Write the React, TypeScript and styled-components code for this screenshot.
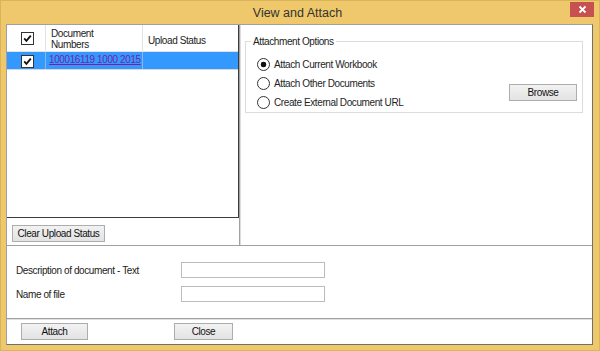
import React from 'react';
import styled, { createGlobalStyle } from 'styled-components';

const GlobalStyle = createGlobalStyle`
  html, body {
    margin: 0;
    padding: 0;
    background: #efc86b;
  }
  body {
    font-family: "Liberation Sans", Arial, sans-serif;
    font-size: 10px;
    letter-spacing: -0.4px;
    color: #1e1e1e;
  }
`;

const CheckMark = ({ checked }: { checked: boolean }) => (
    <CheckBox>
        {checked && (
            <svg width="9" height="9" viewBox="0 0 9 9">
                <path d="M1.2 4.4 L3.4 6.8 L7.8 1.6" fill="none" stroke="#111" strokeWidth="1.8"/>
            </svg>
        )}
    </CheckBox>
);

const Radio = ({ selected, label }: { selected?: boolean; label: string }) => (
    <RadioRow>
        <RadioDot $selected={!!selected}/>
        <span>{label}</span>
    </RadioRow>
);

const App = () => {
    return (
        <Frame>
            <GlobalStyle/>
            <TitleBar>
                <Title>View and Attach</Title>
                <CloseButton>
                    <svg width="9" height="9" viewBox="0 0 9 9">
                        <path d="M1.5 1.5 L7.5 7.5 M7.5 1.5 L1.5 7.5" stroke="#fff" strokeWidth="1.8"/>
                    </svg>
                </CloseButton>
            </TitleBar>
            <Client>
                <TopSection>
                    <LeftPane>
                        <Grid>
                            <HeaderRow>
                                <CheckCell><CheckMark checked/></CheckCell>
                                <HeadCell $width={97}>Document<br/>Numbers</HeadCell>
                                <HeadCell $pad={10}>Upload Status</HeadCell>
                            </HeaderRow>
                            <DataRow>
                                <CheckCell $selected><CheckMark checked/></CheckCell>
                                <DataCell $width={97}><DocLink>100016119 1000 2015</DocLink></DataCell>
                                <DataCell/>
                            </DataRow>
                        </Grid>
                        <ButtonBar>
                            <WinButton $width={93}>Clear Upload Status</WinButton>
                        </ButtonBar>
                    </LeftPane>
                    <RightPane>
                        <GroupBox>
                            <Legend>Attachment Options</Legend>
                            <GroupBody>
                                <RadioList>
                                    <Radio selected label="Attach Current Workbook"/>
                                    <Radio label="Attach Other Documents"/>
                                    <Radio label="Create External Document URL"/>
                                </RadioList>
                                <BrowseSlot>
                                    <WinButton $width={68}>Browse</WinButton>
                                </BrowseSlot>
                            </GroupBody>
                        </GroupBox>
                    </RightPane>
                </TopSection>
                <FormSection>
                    <FormRow>
                        <FieldLabel>Description of document - Text</FieldLabel>
                        <TextBox/>
                    </FormRow>
                    <FormRow>
                        <FieldLabel>Name of file</FieldLabel>
                        <TextBox/>
                    </FormRow>
                </FormSection>
                <BottomBar>
                    <WinButton $width={67}>Attach</WinButton>
                    <WinButton $width={59}>Close</WinButton>
                </BottomBar>
            </Client>
        </Frame>
    );
};
export default App;

const Frame = styled.div`
  width: 600px;
  height: 351px;
  box-sizing: border-box;
  padding: 0 6px 5px 5px;
  display: flex;
  flex-direction: column;
  background: #efc86b;
  border: 1px solid #d9b45c;
`;

const TitleBar = styled.div`
  position: relative;
  height: 23px;
  display: flex;
  align-items: center;
  justify-content: center;
`;

const Title = styled.div`
  font-size: 12.5px;
  letter-spacing: 0;
  color: #333;
  margin-left: -4px;
  margin-top: 1px;
`;

const CloseButton = styled.div`
  position: absolute;
  right: -1px;
  top: 1px;
  width: 24px;
  height: 15px;
  background: #c75050;
  display: flex;
  align-items: center;
  justify-content: center;
`;

const Client = styled.div`
  flex: 1;
  display: flex;
  flex-direction: column;
  background: #fff;
  border: 1px solid #a0a0a0;
  border-right-color: #707070;
  border-bottom-color: #707070;
`;

const TopSection = styled.div`
  height: 220px;
  display: flex;
  border-bottom: 1px solid #a0a0a0;
`;

const LeftPane = styled.div`
  width: 232px;
  display: flex;
  flex-direction: column;
  border-right: 1px solid #a0a0a0;
  margin-right: 1px;
  box-shadow: 1px 0 0 #dcdcdc;
`;

const Grid = styled.div`
  height: 192px;
  border: 1px solid #3c3c3c;
  border-top: none;
  border-left: none;
  background: #fff;
`;

const HeaderRow = styled.div`
  display: flex;
  height: 26px;
  border-bottom: 1px solid #e2e2e2;
`;

const DataRow = styled.div`
  display: flex;
  height: 17px;
  background: #3399ff;
  border-bottom: 1px solid #d8d8d8;
`;

const CheckCell = styled.div<{ $selected?: boolean }>`
  width: 36px;
  display: flex;
  align-items: center;
  justify-content: center;
  border-right: 1px solid ${p => (p.$selected ? '#8ab8e6' : '#e2e2e2')};
  padding-left: 2px;
  padding-top: 1px;
`;

const CheckBox = styled.div`
  width: 11px;
  height: 11px;
  border: 1px solid #333;
  background: #fff;
  display: flex;
  align-items: center;
  justify-content: center;
`;

const HeadCell = styled.div<{ $width?: number; $pad?: number }>`
  ${p => (p.$width ? `width: ${p.$width}px;` : 'flex: 1;')}
  box-sizing: border-box;
  padding: ${p => p.$pad ?? 3}px 0 0 5px;
  border-right: ${p => (p.$width ? '1px solid #e2e2e2' : 'none')};
  line-height: 11px;
  color: #222;
`;

const DataCell = styled.div<{ $width?: number }>`
  ${p => (p.$width ? `width: ${p.$width}px;` : 'flex: 1;')}
  box-sizing: border-box;
  padding: 2px 0 0 3px;
  border-right: ${p => (p.$width ? '1px solid #8ab8e6' : 'none')};
  white-space: nowrap;
`;

const DocLink = styled.span`
  color: #7a1fa2;
  text-decoration: underline;
`;

const ButtonBar = styled.div`
  padding: 7px 0 0 5px;
`;

const WinButton = styled.div<{ $width: number }>`
  width: ${p => p.$width}px;
  height: 17px;
  box-sizing: border-box;
  border: 1px solid #adadad;
  background: linear-gradient(#f2f2f2, #e3e3e3);
  display: flex;
  align-items: center;
  justify-content: center;
  color: #111;
  white-space: nowrap;
`;

const RightPane = styled.div`
  flex: 1;
  padding: 11px 9px 0 4px;
`;

const GroupBox = styled.fieldset`
  margin: 0;
  height: 77px;
  box-sizing: border-box;
  border: 1px solid #dcdcdc;
  padding: 0 5px 0 11px;
`;

const Legend = styled.legend`
  padding: 0 2px;
  margin-left: -6px;
  margin-top: 1px;
  color: #222;
`;

const GroupBody = styled.div`
  display: flex;
  justify-content: space-between;
  padding-top: 11px;
`;

const RadioList = styled.div`
  display: flex;
  flex-direction: column;
  gap: 6px;
`;

const BrowseSlot = styled.div`
  padding-top: 26px;
`;

const RadioRow = styled.div`
  display: flex;
  align-items: center;
  gap: 4px;
  height: 13px;
`;

const RadioDot = styled.div<{ $selected: boolean }>`
  width: 11px;
  height: 11px;
  border: 1px solid #333;
  border-radius: 50%;
  background: ${p => (p.$selected ? 'radial-gradient(circle, #111 0 2.6px, #fff 3.1px)' : '#fff')};
`;

const FormSection = styled.div`
  flex: 1;
  display: flex;
  flex-direction: column;
  gap: 8px;
  padding: 16px 0 0 9px;
  border-bottom: 1px solid #a0a0a0;
  box-shadow: 0 1px 0 #e0e0e0;
`;

const FormRow = styled.div`
  display: flex;
  align-items: center;
`;

const FieldLabel = styled.div`
  width: 165px;
  color: #222;
`;

const TextBox = styled.div`
  width: 144px;
  height: 16px;
  box-sizing: border-box;
  border: 1px solid #bcbcbc;
  background: #fff;
`;

const BottomBar = styled.div`
  height: 25px;
  display: flex;
  align-items: center;
  gap: 86px;
  padding-left: 14px;
`;
